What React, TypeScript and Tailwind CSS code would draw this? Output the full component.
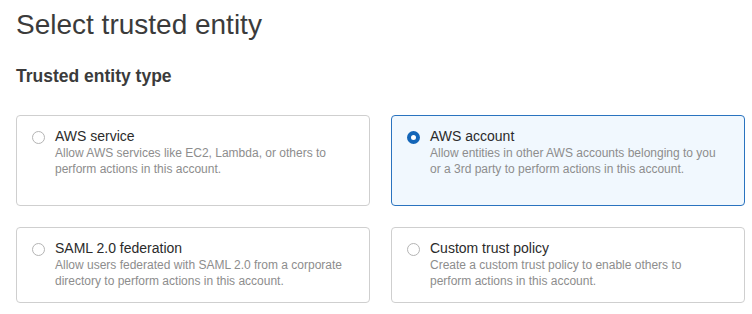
import React from "react";

type Opt = { title: string; desc: string[]; selected?: boolean };

const opts: Opt[] = [
  { title: "AWS service", desc: ["Allow AWS services like EC2, Lambda, or others to", "perform actions in this account."] },
  { title: "AWS account", desc: ["Allow entities in other AWS accounts belonging to you", "or a 3rd party to perform actions in this account."], selected: true },
  { title: "SAML 2.0 federation", desc: ["Allow users federated with SAML 2.0 from a corporate", "directory to perform actions in this account."] },
  { title: "Custom trust policy", desc: ["Create a custom trust policy to enable others to", "perform actions in this account."] },
];

function Radio({ selected }: { selected?: boolean }) {
  return selected ? (
    <span className="mt-[5px] box-border block h-[13px] w-[13px] shrink-0 rounded-full border-[4px] border-[#1466b8] bg-white" />
  ) : (
    <span className="mt-[5px] box-border block h-[13px] w-[13px] shrink-0 rounded-full border border-[#b4b4b4] bg-white" />
  );
}

function Tile({ o }: { o: Opt }) {
  return (
    <div
      className={
        o.selected
          ? "flex gap-[10px] rounded-[4px] border border-[#2a73bf] bg-[#f1f8fe] pl-[15px] pr-3 pt-[10px]"
          : "flex gap-[10px] rounded-[4px] border border-[#cfcfcf] bg-white pl-[15px] pr-3 pt-[10px]"
      }
    >
      <Radio selected={o.selected} />
      <div>
        <div className="text-[14px] leading-[20px] text-[#2b2b2b]">{o.title}</div>
        {o.desc.map((d, i) => (
          <div key={i} className="text-[12px] leading-[15.5px] text-[#8d8d8d]">
            {d}
          </div>
        ))}
      </div>
    </div>
  );
}

export default function App() {
  return (
    <div
      className="h-[314px] w-[752px] bg-white pl-4 pr-[7px] pt-[9px]"
      style={{ fontFamily: '"Liberation Sans", Arial, sans-serif' }}
    >
      <h1 className="text-[28px] leading-[32px] text-[#3b3b3b]">Select trusted entity</h1>
      <h2 className="mt-[23px] text-[17.5px] font-bold leading-[24px] text-[#3b3b3b]">Trusted entity type</h2>
      <div className="mt-[27px] grid grid-cols-2 grid-rows-[91px_76px] gap-x-[21px] gap-y-[21px]">
        {opts.map((o) => (
          <Tile key={o.title} o={o} />
        ))}
      </div>
    </div>
  );
}
